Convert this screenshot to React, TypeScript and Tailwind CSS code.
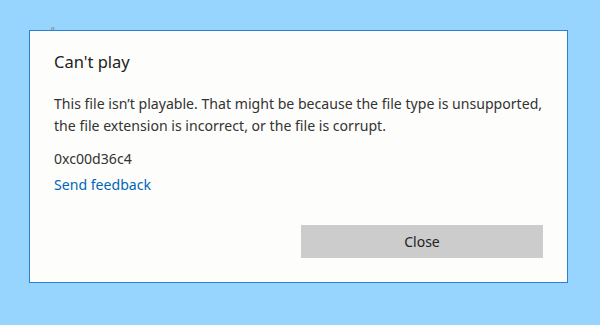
import React from "react";

export default function App() {
  return (
    <div
      className="w-[600px] h-[325px] bg-[#97d4fe] pt-[30px] pl-[29px] relative"
      style={{ fontFamily: '"Noto Sans", "Open Sans", sans-serif' }}
    >
      <span className="absolute left-[51px] top-[26px] text-[10px] leading-none text-[#888]">ʺ</span>
      <div className="w-[539px] h-[253px] border border-[#2b80d5] bg-[#fdfdfb] flex flex-col pl-[24px] pr-[24px] pt-[18px] pb-[24px] text-[#333]">
        <div className="text-[16.5px] leading-[26px] text-[#222]">Can't play</div>
        <div className="mt-[18px] text-[14.1px] leading-[22px] whitespace-nowrap">
          This file isn’t playable. That might be because the file type is unsupported,
          <br />
          the file extension is incorrect, or the file is corrupt.
        </div>
        <div className="mt-[13px] text-[14.1px] leading-[18px]">0xc00d36c4</div>
        <div className="mt-[8px] text-[14.1px] leading-[18px] text-[#0067b8]">Send feedback</div>
        <div className="mt-auto flex justify-end">
          <button className="w-[242px] h-[33px] bg-[#cccccc] text-[14px] text-[#222]">Close</button>
        </div>
      </div>
    </div>
  );
}
